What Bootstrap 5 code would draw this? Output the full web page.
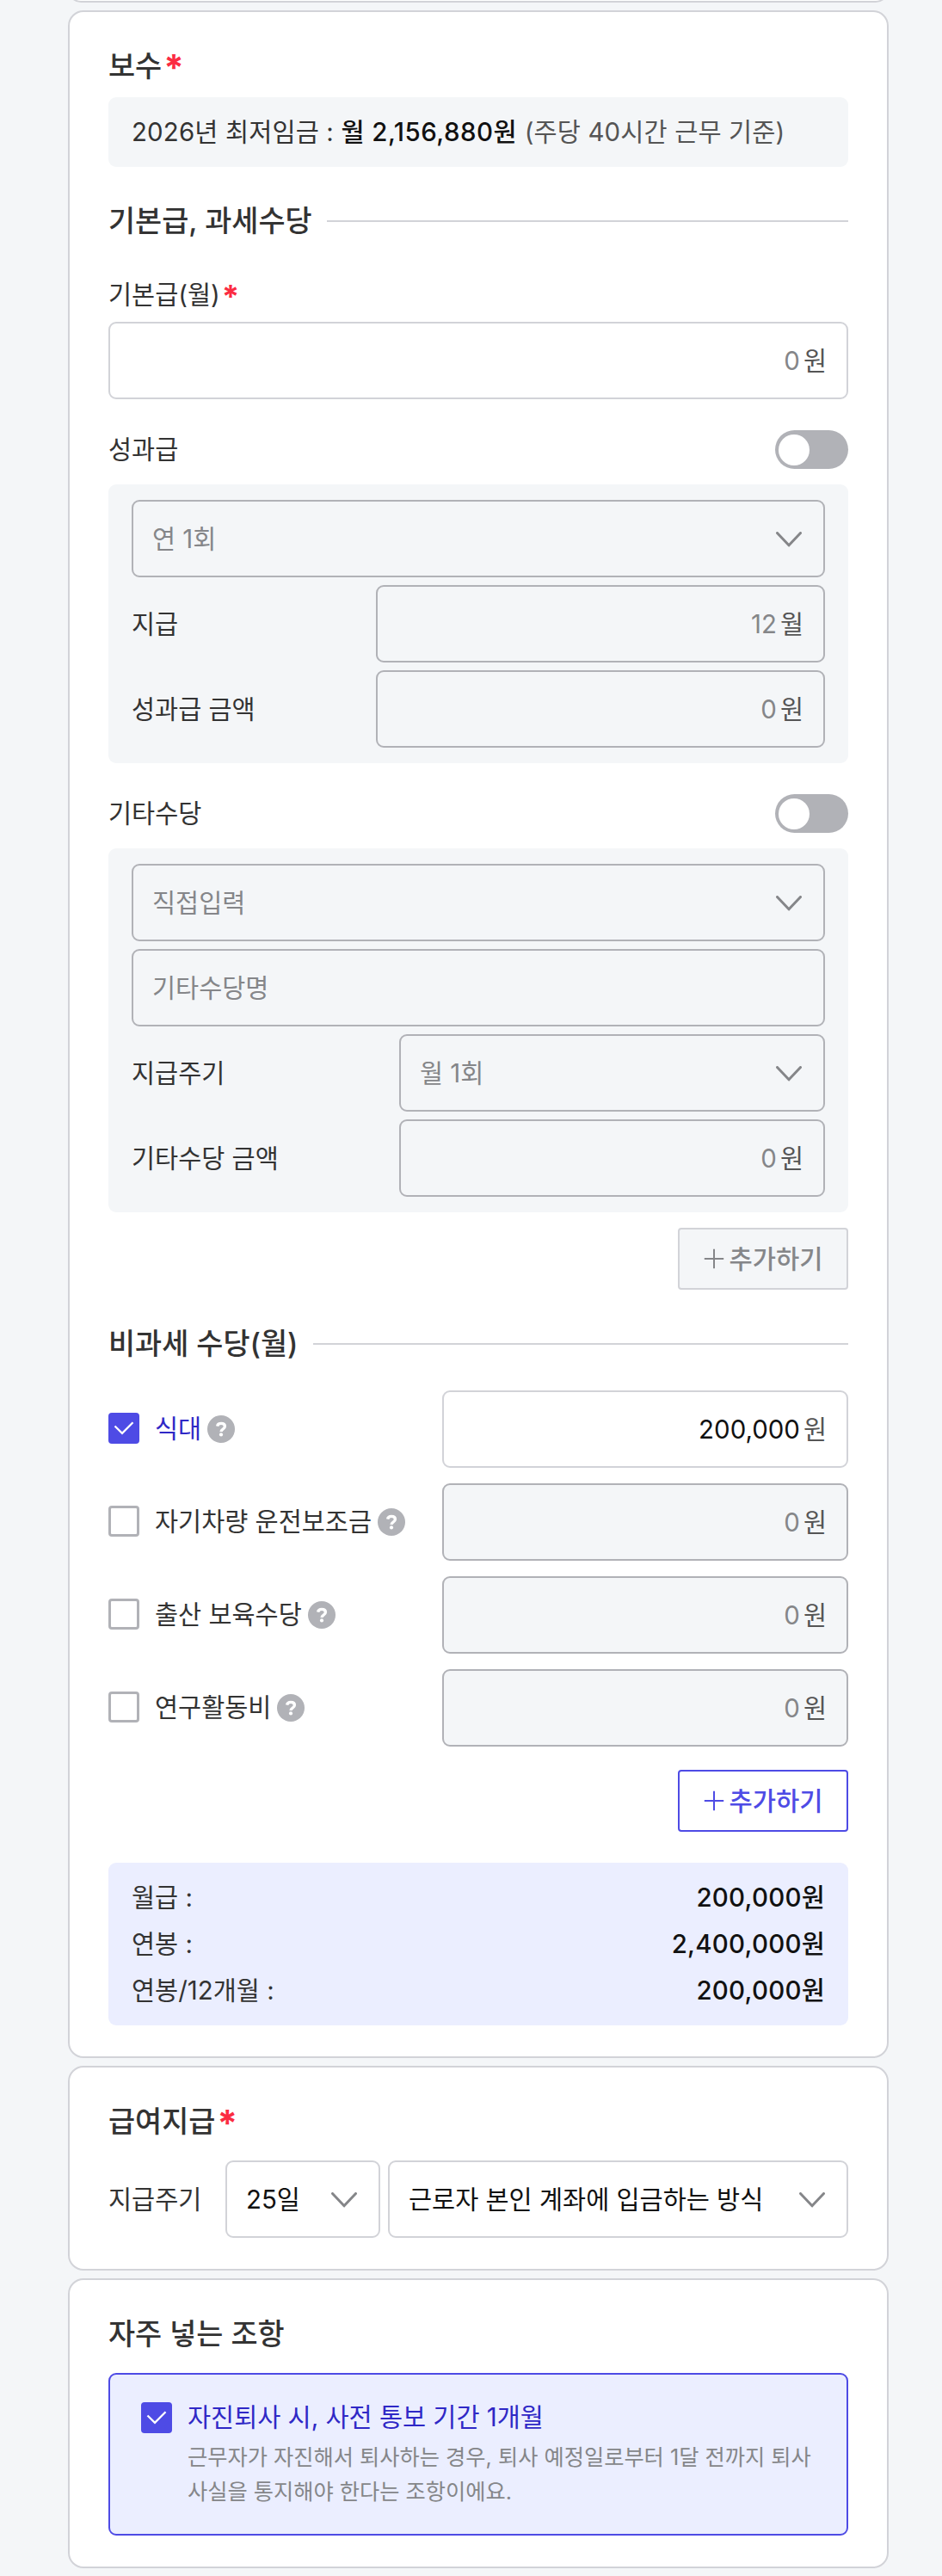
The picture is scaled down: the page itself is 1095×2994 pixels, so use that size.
<!DOCTYPE html>
<html lang="ko">
<head>
<meta charset="utf-8">
<meta name="viewport" content="width=device-width, initial-scale=1">
<title>보수</title>
<link href="https://cdn.jsdelivr.net/npm/bootstrap@5.3.0/dist/css/bootstrap.min.css" rel="stylesheet">
<style>
  :root { --line:#d2d3d8; --line-off:#b1b2b7; --soft:#f4f6f8; --point:#4e4be5; --point-deep:#2f28c6; --point-soft:#ebeeff; }
  body { background:var(--soft); color:#333; font-family:Inter,"Noto Sans CJK KR",sans-serif; font-size:29.45px; line-height:45px; font-weight:399; overflow-x:hidden; }
  .sheet { width:954px; margin-left:79px; gap:9px; }
  .panel-card { background:#fff; border:2px solid var(--line); border-radius:18px; padding:36px 45px; }
  .prev-card { height:30px; margin-top:-27px; padding:0; }
  .title { font-size:33.8px; line-height:54px; font-weight:500; margin:0; color:#333; }
  .req { color:#fb2c42; font-weight:700; margin-left:2px; font-size:1.25em; line-height:0; vertical-align:-.13em; }
  .rule { height:2px; background:var(--line); margin-left:17px; }
  .soft-box { background:var(--soft); border-radius:9px; }
  .notice { padding:18px 27px; margin-top:9px; letter-spacing:.15px; }
  .mt-36 { margin-top:36px; } .mt-27 { margin-top:27px; } .mt-18 { margin-top:18px; } .mt-9 { margin-top:9px; }
  .gap-9 { gap:9px; } .gap-18 { gap:18px; }
  .fields { padding:18px 27px; }
  .field { height:90px; border:2px solid var(--line); border-radius:9px; background:#fff; padding:0 25px 0 22px; color:#111; }
  .field.off { background:var(--soft); border-color:var(--line-off); color:#858689; }
  .amount { justify-content:flex-end; gap:4px; padding-right:23px; }
  .empty { color:#858689; }
  .unit { color:#555; }
  .w-522 { width:522px; } .w-495 { width:495px; } .w-472 { width:472px; } .w-180 { width:180px; }
  .toggle { width:85px; height:45px; border-radius:23px; background:var(--line-off); padding:4.5px 4px; }
  .toggle i { display:block; width:36px; height:36px; border-radius:50%; background:#fff; }
  .btn-add { width:198px; height:72px; border:2px solid var(--point); border-radius:4px; color:var(--point); background:#fff; font-size:29.6px; font-weight:500; line-height:45px; padding:0; gap:6px; }
  .btn-add.disabled { border-color:var(--line); color:#858689; background:var(--soft); opacity:1; }
  .tick { width:36px; height:36px; border:3px solid var(--line-off); border-radius:4px; background:#fff; flex:none; }
  .tick.on { border:0; background:var(--point); }
  .tick svg, .btn-add svg, .field svg, .help { display:block; flex:none; }
  .field svg { margin-top:2px; }
  .allow { gap:18px; padding-bottom:2px; }
  .help { margin-left:-11px; margin-top:2px; }
  .on-text { color:var(--point-deep); }
  .strong { color:#111; font-weight:500; letter-spacing:.5px; }
  .summary { background:var(--point-soft); border-radius:9px; padding:13px 27px 14px; line-height:54px; }
  .summary .strong { letter-spacing:.25px; }
  .clause { height:189px; background:var(--point-soft); border:2px solid var(--point); border-radius:9px; padding:27px 36px; gap:18px; }
  .clause .tick { margin-top:5px; }
  .clause-desc { font-size:25.25px; line-height:40px; color:#858689; margin:4px 0 0; }
</style>
</head>
<body>
<svg width="0" height="0" class="d-none">
  <symbol id="chev" viewBox="0 0 30 18"><path d="M1.5 1.5 15 15.8 28.5 1.5" fill="none" stroke="#858689" stroke-width="3" stroke-linecap="round" stroke-linejoin="round"/></symbol>
  <symbol id="plus" viewBox="0 0 24 24"><path d="M12 .8v22.4M.8 12h22.4" fill="none" stroke="currentColor" stroke-width="2"/></symbol>
  <symbol id="check" viewBox="0 0 36 36"><path d="M7.5 15.5 16 23.8 28.5 11.2" fill="none" stroke="#fff" stroke-width="2.3"/></symbol>
  <symbol id="help" viewBox="0 0 32 32"><circle cx="16" cy="16" r="16" fill="#b1b2b7"/><path d="M11.6 12.6C12 10.5 13.6 9.4 16 9.4c2.600 0 4.400 1.300 4.400 3.400 0 1.700-1 2.500-2.300 3.300-1.300.8-2 1.300-2 2.900" fill="none" stroke="#fff" stroke-width="3.400"/><circle cx="16" cy="22.400" r="2.100" fill="#fff"/></symbol>
</svg>
<main class="sheet d-flex flex-column">
  <div class="panel-card prev-card"></div>

  <section class="panel-card">
    <h2 class="title">보수<span class="req">*</span></h2>
    <div class="soft-box notice">2026년 최저임금 : <span class="strong">월 2,156,880원</span> <span class="unit">(주당 40시간 근무 기준)</span></div>

    <div class="d-flex align-items-center mt-36"><h3 class="title">기본급, 과세수당</h3><div class="rule flex-grow-1"></div></div>

    <div class="mt-36">기본급(월)<span class="req">*</span></div>
    <div class="field amount d-flex align-items-center mt-9"><span class="empty">0</span><span class="unit">원</span></div>

    <div class="d-flex align-items-center justify-content-between mt-36"><span>성과급</span><div class="toggle"><i></i></div></div>
    <div class="soft-box fields d-flex flex-column gap-9 mt-18">
      <div class="field off d-flex align-items-center justify-content-between"><span>연 1회</span><svg width="30" height="18"><use href="#chev"/></svg></div>
      <div class="d-flex align-items-center justify-content-between"><span>지급</span><div class="field off amount w-522 d-flex align-items-center"><span>12</span><span class="unit">월</span></div></div>
      <div class="d-flex align-items-center justify-content-between"><span>성과급 금액</span><div class="field off amount w-522 d-flex align-items-center"><span>0</span><span class="unit">원</span></div></div>
    </div>

    <div class="d-flex align-items-center justify-content-between mt-36"><span>기타수당</span><div class="toggle"><i></i></div></div>
    <div class="soft-box fields d-flex flex-column gap-9 mt-18">
      <div class="field off d-flex align-items-center justify-content-between"><span>직접입력</span><svg width="30" height="18"><use href="#chev"/></svg></div>
      <div class="field off d-flex align-items-center"><span>기타수당명</span></div>
      <div class="d-flex align-items-center justify-content-between"><span>지급주기</span><div class="field off w-495 d-flex align-items-center justify-content-between"><span>월 1회</span><svg width="30" height="18"><use href="#chev"/></svg></div></div>
      <div class="d-flex align-items-center justify-content-between"><span>기타수당 금액</span><div class="field off amount w-495 d-flex align-items-center"><span>0</span><span class="unit">원</span></div></div>
    </div>
    <div class="d-flex justify-content-end mt-18"><div class="btn btn-add disabled d-flex align-items-center justify-content-center"><svg width="24" height="24"><use href="#plus"/></svg><span>추가하기</span></div></div>

    <div class="d-flex align-items-center mt-36"><h3 class="title">비과세 수당(월)</h3><div class="rule flex-grow-1"></div></div>

    <div class="d-flex flex-column gap-18 mt-27">
      <div class="d-flex align-items-center justify-content-between">
        <div class="allow d-flex align-items-center"><span class="tick on"><svg width="36" height="36"><use href="#check"/></svg></span><span class="on-text">식대</span><svg class="help" width="32" height="32"><use href="#help"/></svg></div>
        <div class="field amount w-472 d-flex align-items-center"><span>200,000</span><span class="unit">원</span></div>
      </div>
      <div class="d-flex align-items-center justify-content-between">
        <div class="allow d-flex align-items-center"><span class="tick"></span><span>자기차량 운전보조금</span><svg class="help" width="32" height="32"><use href="#help"/></svg></div>
        <div class="field off amount w-472 d-flex align-items-center"><span>0</span><span class="unit">원</span></div>
      </div>
      <div class="d-flex align-items-center justify-content-between">
        <div class="allow d-flex align-items-center"><span class="tick"></span><span>출산 보육수당</span><svg class="help" width="32" height="32"><use href="#help"/></svg></div>
        <div class="field off amount w-472 d-flex align-items-center"><span>0</span><span class="unit">원</span></div>
      </div>
      <div class="d-flex align-items-center justify-content-between">
        <div class="allow d-flex align-items-center"><span class="tick"></span><span>연구활동비</span><svg class="help" width="32" height="32"><use href="#help"/></svg></div>
        <div class="field off amount w-472 d-flex align-items-center"><span>0</span><span class="unit">원</span></div>
      </div>
    </div>
    <div class="d-flex justify-content-end mt-27"><div class="btn btn-add d-flex align-items-center justify-content-center"><svg width="24" height="24"><use href="#plus"/></svg><span>추가하기</span></div></div>

    <div class="summary mt-36">
      <div class="d-flex justify-content-between"><span>월급 :</span><span class="strong">200,000원</span></div>
      <div class="d-flex justify-content-between"><span>연봉 :</span><span class="strong">2,400,000원</span></div>
      <div class="d-flex justify-content-between"><span>연봉/12개월 :</span><span class="strong">200,000원</span></div>
    </div>
  </section>

  <section class="panel-card">
    <h2 class="title">급여지급<span class="req">*</span></h2>
    <div class="d-flex align-items-center gap-9 mt-18">
      <span class="flex-grow-1 text-nowrap">지급주기</span>
      <div class="field w-180 d-flex align-items-center justify-content-between"><span>25일</span><svg width="30" height="18"><use href="#chev"/></svg></div>
      <div class="field d-flex align-items-center justify-content-between" style="width:535px"><span class="text-nowrap">근로자 본인 계좌에 입금하는 방식</span><svg width="30" height="18"><use href="#chev"/></svg></div>
    </div>
  </section>

  <section class="panel-card">
    <h2 class="title">자주 넣는 조항</h2>
    <div class="clause d-flex align-items-start mt-18">
      <span class="tick on"><svg width="36" height="36"><use href="#check"/></svg></span>
      <div class="text-nowrap">
        <div class="on-text">자진퇴사 시, 사전 통보 기간 1개월</div>
        <p class="clause-desc">근무자가 자진해서 퇴사하는 경우, 퇴사 예정일로부터 1달 전까지 퇴사<br>사실을 통지해야 한다는 조항이에요.</p>
      </div>
    </div>
  </section>
</main>
<script src="https://cdn.jsdelivr.net/npm/bootstrap@5.3.0/dist/js/bootstrap.bundle.min.js"></script>
</body>
</html>
